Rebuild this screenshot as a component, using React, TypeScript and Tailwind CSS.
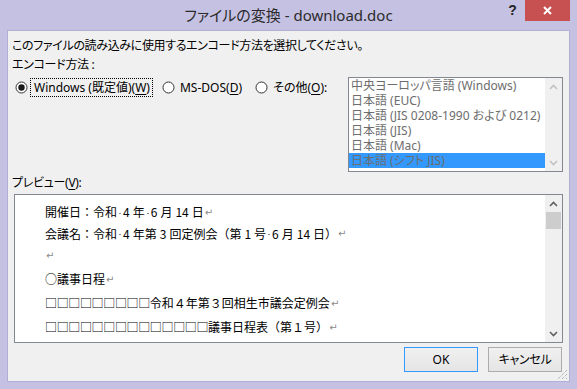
import React from 'react'

const ui = "font-['Noto_Sans','Noto_Sans_CJK_JP',sans-serif] [font-feature-settings:'palt']"
const mono = "font-['Noto_Sans_CJK_JP',sans-serif] [font-feature-settings:normal]"

function Radio({ checked }: { checked?: boolean }) {
  return (
    <svg width="13" height="13" viewBox="0 0 13 13" className="shrink-0">
      <circle cx="6.5" cy="6.5" r="5.5" fill="#fff" stroke="#333" strokeWidth="1" />
      {checked && <circle cx="6.5" cy="6.5" r="3.2" fill="#1a1a1a" />}
    </svg>
  )
}

function Chevron({ up, color }: { up?: boolean; color: string }) {
  return (
    <svg width="9" height="6" viewBox="0 0 9 6">
      <polyline
        points={up ? '1,5 4.5,1.5 8,5' : '1,1 4.5,4.5 8,1'}
        fill="none"
        stroke={color}
        strokeWidth="1.6"
      />
    </svg>
  )
}

// half-width space mark and CJK/ASCII auto spacing
const Sp = () => (
  <span className="inline-flex w-[6px] justify-center items-center self-center">
    <span className="w-[2px] h-[1px] bg-[#8a8a8a] mt-[2px]" />
  </span>
)
const G = () => <span className="inline-block w-[3px]" />
const Ret = () => (
  <span className="text-[#8a8a8a] text-[10px] ml-[1px] font-['DejaVu_Sans',sans-serif]">↵</span>
)
const Boxes = ({ n }: { n: number }) => (
  <span className="tracking-[-0.35px]">{'□'.repeat(n)}</span>
)

const encodings = [
  '中央ヨーロッパ言語 (Windows)',
  '日本語 (EUC)',
  '日本語 (JIS 0208-1990 および 0212)',
  '日本語 (JIS)',
  '日本語 (Mac)',
  '日本語 (シフト JIS)',
]

export default function App() {
  return (
    <div className={`w-[577px] h-[389px] bg-[#c5c1e3] flex flex-col text-[12px] text-black ${ui}`}>
      {/* title bar */}
      <div className="h-[30px] flex items-start shrink-0">
        <div className="w-[77px]" />
        <div className="flex-1 text-center text-[15px] leading-[20px] pt-[5px] text-[#2b2b2b]">
          ファイルの変換 - download.doc
        </div>
        <div className="w-[77px] flex items-start">
          <div className="w-[25px] h-[21px] flex items-center justify-center font-bold text-[14px] text-[#222] font-['Liberation_Sans',sans-serif]">
            ?
          </div>
          <div className="w-[45px] h-[21px] bg-[#c75050] flex items-center justify-center">
            <svg width="9" height="9" viewBox="0 0 9 9">
              <path d="M1 1 L8 8 M8 1 L1 8" stroke="#fff" strokeWidth="2" />
            </svg>
          </div>
        </div>
      </div>

      {/* client area */}
      <div className="mx-[7px] h-[352px] border border-[#b3aed6] bg-[#f0f0f0] relative flex flex-col">
        <div className="pl-[4px] pt-[7px] leading-[16px] tracking-[-0.35px]">
          このファイルの読み込みに使用するエンコード方法を選択してください。
        </div>
        <div className="pl-[4px] mt-[3px] leading-[16px] tracking-[-0.3px]">エンコード方法 :</div>

        <div className="mt-[4px] flex items-start">
          <div className="flex items-center h-[19px] mt-[1px] pl-[7px] leading-[16px]">
            <Radio checked />
            <div className="ml-[2px] border border-dotted border-black pl-[3px] pr-[2px] h-[19px] flex items-center">
              Windows (既定値)(<span className="underline underline-offset-2">W</span>)
            </div>
            <div className="ml-[9px]">
              <Radio />
            </div>
            <div className="ml-[2px] border border-transparent pl-[2px] pr-[2px] h-[19px] flex items-center">
              MS-DOS(<span className="underline underline-offset-2">D</span>)
            </div>
            <div className="ml-[10px]">
              <Radio />
            </div>
            <div className="ml-[2px] border border-transparent pl-[2px] pr-[2px] h-[19px] flex items-center">
              その他(<span className="underline underline-offset-2">O</span>):
            </div>
          </div>

          <div className="ml-auto mr-[6px] w-[215px] h-[95px] border border-[#828790] bg-white flex">
            <div className="flex-1 min-w-0 overflow-hidden">
              {encodings.map((e, i) => (
                <div
                  key={i}
                  className={`h-[15px] leading-[15px] pl-[2px] whitespace-nowrap text-[#6d6d6d] ${
                    i === encodings.length - 1 ? 'bg-[#3399ff]' : ''
                  }`}
                >
                  {e}
                </div>
              ))}
            </div>
            <div className="w-[17px] bg-[#f0f0f0] flex flex-col justify-between">
              <div className="h-[17px] flex items-center justify-center">
                <Chevron up color="#c2c2c2" />
              </div>
              <div className="h-[17px] flex items-center justify-center">
                <Chevron color="#c2c2c2" />
              </div>
            </div>
          </div>
        </div>

        <div className="pl-[4px] mt-[3px] leading-[16px] tracking-[-0.3px]">
          プレビュー(<span className="underline underline-offset-2">V</span>):
        </div>

        <div className="ml-[6px] mr-[6px] mt-[3px] h-[149px] border border-[#828790] bg-white flex">
          <div className={`flex-1 min-w-0 overflow-hidden pl-[30px] pt-[6px] whitespace-nowrap ${mono}`}>
            <div className="h-[22px] flex items-center">
              開催日：令和<Sp />4<G />年<Sp />6<G />月<G />14<G />日<Ret />
            </div>
            <div className="h-[21px] flex items-center">
              会議名：令和<Sp />4<G />年第<G />3<G />回定例会（第<G />1<G />号<Sp />6<G />月<G />14<G />日）<Ret />
            </div>
            <div className="h-[23px] flex items-center">
              <Ret />
            </div>
            <div className="h-[24px] flex items-center">
              ○議事日程<Ret />
            </div>
            <div className="h-[24px] flex items-center">
              <Boxes n={9} />令和４年第３回相生市議会定例会<Ret />
            </div>
            <div className="h-[24px] flex items-center">
              <Boxes n={14} />議事日程表（第１号）<Ret />
            </div>
          </div>
          <div className="w-[17px] bg-[#f0f0f0] flex flex-col">
            <div className="h-[17px] flex items-center justify-center">
              <Chevron up color="#606060" />
            </div>
            <div className="h-[17px] ml-[1px] mr-[1px] bg-[#cdcdcd]" />
            <div className="flex-1" />
            <div className="h-[17px] flex items-center justify-center">
              <Chevron color="#606060" />
            </div>
          </div>
        </div>

        <div className="mt-[4px] mr-[7px] flex justify-end gap-[10px]">
          <button className="w-[74px] h-[25px] border border-[#3399ff] bg-gradient-to-b from-[#f0f0f0] to-[#e5e5e5] leading-[16px]">
            OK
          </button>
          <button className="w-[74px] h-[25px] border border-[#acacac] bg-gradient-to-b from-[#f0f0f0] to-[#e5e5e5] leading-[16px] tracking-[-0.3px]">
            キャンセル
          </button>
        </div>

        {/* size grip */}
        <svg width="12" height="12" viewBox="0 0 12 12" className="absolute right-[1px] bottom-[1px]">
          <path d="M11 2 L2 11 M11 6 L6 11 M11 10 L10 11" stroke="#9a9a9a" strokeWidth="1" strokeDasharray="1 1" />
        </svg>
      </div>
    </div>
  )
}
